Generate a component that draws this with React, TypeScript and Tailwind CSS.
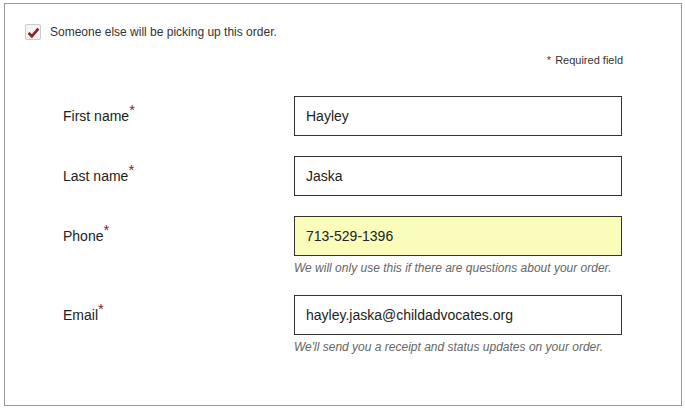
import { FunctionComponent } from 'react';

const Req = () => <sup className="text-[15px] text-[#8b2323] relative top-[-6px]">*</sup>;

type FieldProps = { label: string; value: string; hint?: string; highlight?: boolean };

const Field: FunctionComponent<FieldProps> = ({ label, value, hint, highlight }) => {
    return (
        <div className="flex">
            <div className="w-[231px] h-10 flex items-center text-[14px] text-[#222]">
                <span>
                    {label}
                    <Req />
                </span>
            </div>
            <div className="w-[328px]">
                <div
                    className={`h-10 border border-[#333] flex items-center pl-[11px] text-[14px] text-[#222] ${
                        highlight ? 'bg-[#fafcba]' : 'bg-white'
                    }`}
                >
                    {value}
                </div>
                {hint && <p className="mt-[6px] text-[12px] leading-[13px] italic text-[#666]">{hint}</p>}
            </div>
        </div>
    );
};

const App: FunctionComponent = () => {
    return (
        <div className="w-[685px] h-[408px] bg-white pt-[3px] pl-1" style={{ fontFamily: '"Liberation Sans", Arial, sans-serif' }}>
            <div className="w-[678px] h-[403px] border border-[#999] pt-5">
                <div className="flex items-center h-4 ml-5">
                    <div className="w-4 h-4 border border-[#ccc] rounded-[2px] bg-[#f4f4f4] flex items-center justify-center">
                        <svg width="13" height="13" viewBox="0 0 12 12">
                            <polyline points="1.5,6.5 4.5,9.5 10.5,2.5" fill="none" stroke="#8b2323" strokeWidth="2.5" />
                        </svg>
                    </div>
                    <span className="ml-[9px] text-[12px] text-[#333]">Someone else will be picking up this order.</span>
                </div>
                <div className="mt-[13px] flex justify-end pr-[58px] text-[11px] leading-[14px] text-[#333]">
                    <span>
                        <span className="text-[#8b2323] mr-1">*</span>Required field
                    </span>
                </div>
                <div className="ml-[58px] mt-[29px] flex flex-col gap-5">
                    <Field label="First name" value="Hayley" />
                    <Field label="Last name" value="Jaska" />
                    <Field
                        label="Phone"
                        value="713-529-1396"
                        highlight
                        hint="We will only use this if there are questions about your order."
                    />
                    <Field
                        label="Email"
                        value="hayley.jaska@childadvocates.org"
                        hint="We'll send you a receipt and status updates on your order."
                    />
                </div>
            </div>
        </div>
    );
};

export default App;
